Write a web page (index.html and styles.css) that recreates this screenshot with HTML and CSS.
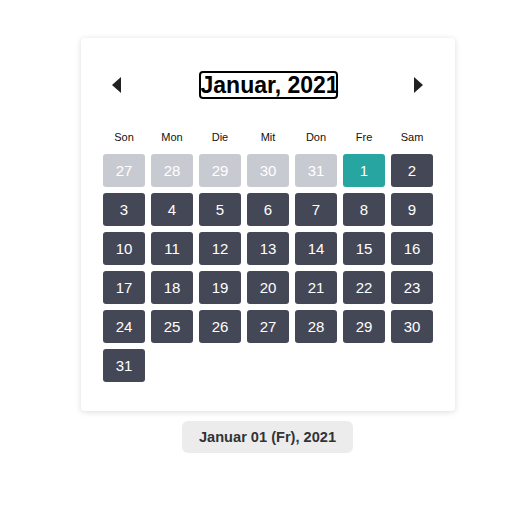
FILE: index.html
```html
<!DOCTYPE html>
<html>
<head>
<meta charset="utf-8">
<link rel="stylesheet" href="styles.css">
</head>
<body>
<div class="page">
  <div class="card">
    <div class="header">
      <span class="arrow arrow-left"></span>
      <span class="title">Januar, 2021</span>
      <span class="arrow arrow-right"></span>
    </div>
    <div class="weekdays">
      <span>Son</span><span>Mon</span><span>Die</span><span>Mit</span><span>Don</span><span>Fre</span><span>Sam</span>
    </div>
    <div class="grid">
      <div class="day other">27</div><div class="day other">28</div><div class="day other">29</div><div class="day other">30</div><div class="day other">31</div><div class="day selected">1</div><div class="day">2</div>
      <div class="day">3</div><div class="day">4</div><div class="day">5</div><div class="day">6</div><div class="day">7</div><div class="day">8</div><div class="day">9</div>
      <div class="day">10</div><div class="day">11</div><div class="day">12</div><div class="day">13</div><div class="day">14</div><div class="day">15</div><div class="day">16</div>
      <div class="day">17</div><div class="day">18</div><div class="day">19</div><div class="day">20</div><div class="day">21</div><div class="day">22</div><div class="day">23</div>
      <div class="day">24</div><div class="day">25</div><div class="day">26</div><div class="day">27</div><div class="day">28</div><div class="day">29</div><div class="day">30</div>
      <div class="day">31</div>
    </div>
  </div>
  <div class="result">Januar 01 (Fr), 2021</div>
</div>
</body>
</html>
```
FILE: styles.css
```css
html, body {
  margin: 0;
  padding: 0;
  background: #fff;
  font-family: "Liberation Sans", Arial, sans-serif;
}
.page {
  width: 532px;
  padding-top: 38px;
  display: flex;
  flex-direction: column;
  align-items: center;
}
.card {
  box-sizing: border-box;
  width: 374px;
  margin-left: 4px;
  padding: 33px 22px 29px 22px;
  background: #fff;
  border-radius: 4px;
  box-shadow: 0 1px 6px rgba(0, 0, 0, 0.14);
}
.header {
  display: flex;
  align-items: center;
  justify-content: space-between;
  height: 28px;
  padding: 0 10px 0 9px;
}
.arrow {
  width: 0;
  height: 0;
  border-top: 8px solid transparent;
  border-bottom: 8px solid transparent;
}
.arrow-left {
  border-right: 9px solid #222;
}
.arrow-right {
  border-left: 9px solid #222;
}
.title {
  box-sizing: border-box;
  height: 28px;
  width: 139px;
  border: 2px solid #000;
  border-radius: 4px;
  font-size: 23px;
  font-weight: bold;
  line-height: 24px;
  text-align: center;
  white-space: nowrap;
  color: #000;
  margin-left: 1px;
}
.weekdays {
  display: grid;
  grid-template-columns: repeat(7, 42px);
  column-gap: 6px;
  margin-top: 29px;
  height: 18px;
  line-height: 18px;
  font-size: 11px;
  color: #111;
  text-align: center;
}
.grid {
  display: grid;
  grid-template-columns: repeat(7, 42px);
  grid-auto-rows: 33px;
  gap: 6px;
  margin-top: 8px;
}
.day {
  background: #444856;
  color: #fff;
  border-radius: 3px;
  font-size: 15px;
  display: flex;
  align-items: center;
  justify-content: center;
}
.day.other {
  background: #c8cad2;
}
.day.selected {
  background: #27a5a1;
}
.result {
  margin-top: 10px;
  margin-left: 3px;
  width: 171px;
  height: 32px;
  line-height: 32px;
  background: #ececec;
  border-radius: 6px;
  font-size: 14.6px;
  font-weight: bold;
  color: #333;
  text-align: center;
}
```
